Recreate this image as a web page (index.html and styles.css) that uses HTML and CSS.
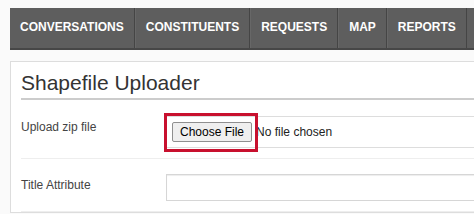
FILE: index.html
```html
<!DOCTYPE html>
<html lang="en">
<head>
<meta charset="utf-8">
<title>Shapefile Uploader</title>
<link rel="stylesheet" href="styles.css">
</head>
<body>
<div class="page">
  <nav class="topnav">
    <a class="nav-item" href="#">CONVERSATIONS</a>
    <a class="nav-item" href="#">CONSTITUENTS</a>
    <a class="nav-item" href="#">REQUESTS</a>
    <a class="nav-item" href="#">MAP</a>
    <a class="nav-item" href="#">REPORTS</a>
  </nav>
  <div class="panel">
    <h1 class="panel-title">Shapefile Uploader</h1>
    <div class="form-row">
      <label class="form-label">Upload zip file</label>
      <div class="form-control file-control">
        <button class="file-btn" type="button">Choose File</button>
        <span class="file-status">No file chosen</span>
        <span class="highlight"></span>
      </div>
    </div>
    <div class="form-row">
      <label class="form-label">Title Attribute</label>
      <input class="form-control text-input" type="text">
    </div>
  </div>
</div>
</body>
</html>
```
FILE: styles.css
```css
html, body {
  margin: 0;
  padding: 0;
  overflow: hidden;
  background: #fafafa;
  font-family: "Liberation Sans", Arial, sans-serif;
  font-size: 12px;
  color: #333;
}

.page {
  width: 720px;
  padding: 8px 10px;
}

.topnav {
  display: flex;
  background: #5e5e5e;
  border-bottom: 2px solid #474747;
  height: 40px;
}

.nav-item {
  display: block;
  padding: 0 10px 2px;
  line-height: 38px;
  font-weight: bold;
  font-size: 12px;
  color: #fff;
  text-decoration: none;
  border-right: 1px solid #454545;
  white-space: nowrap;
}

.nav-item + .nav-item {
  border-left: 1px solid #676767;
}

.panel {
  margin-top: 11px;
  background: #fff;
  border: 1px solid #ddd;
  padding: 0 10px;
}

.panel-title {
  margin: 0 0 1px;
  padding: 9px 0 3px;
  font-size: 21px;
  line-height: 24px;
  font-weight: normal;
  color: #333;
  border-bottom: 2px solid #ccc;
}

.form-row {
  display: flex;
  align-items: flex-start;
  padding: 15px 0 10px;
  border-bottom: 1px solid #eee;
}

.form-label {
  flex: 0 0 145px;
  padding-top: 4px;
  line-height: 14px;
  color: #444;
}

.form-control {
  flex: 1 1 auto;
  box-sizing: border-box;
  border: 1px solid #ddd;
  background: #fff;
}

.file-control {
  position: relative;
  display: flex;
  align-items: center;
  padding: 5px;
}

.file-btn {
  margin: 0 4px 0 0;
  padding: 2px 7px;
  height: 20px;
  box-sizing: border-box;
  font-family: "Liberation Sans", Arial, sans-serif;
  font-size: 12px;
  line-height: 14px;
  color: #000;
  background: #efefef;
  border: 1px solid #8f8f8f;
  border-radius: 2px;
}

.file-status {
  line-height: 14px;
  color: #222;
}

.highlight {
  position: absolute;
  left: -3px;
  top: -4px;
  width: 94px;
  height: 39px;
  box-sizing: border-box;
  border: 3px solid #c8102e;
}

.text-input {
  height: 27px;
  margin: 0;
  padding: 4px 6px;
  font-family: "Liberation Sans", Arial, sans-serif;
  font-size: 12px;
  border-color: #d6d6d6;
  box-shadow: inset 0 1px 1px rgba(0, 0, 0, 0.075);
  outline: none;
}
```
